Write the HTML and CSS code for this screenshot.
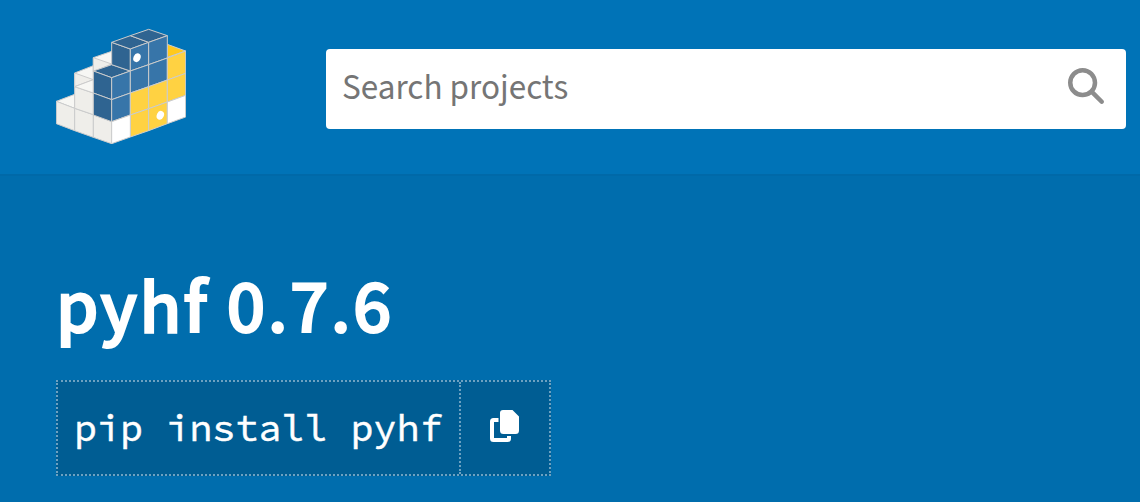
FILE: index.html
```html
<!DOCTYPE html>
<html lang="en">
<head>
<meta charset="utf-8">
<title>pyhf 0.7.6</title>
<link rel="stylesheet" href="styles.css">
</head>
<body>
<header class="site-header">
  <a class="logo" aria-label="PyPI">
    <svg class="logo-art" viewBox="30 24 390 348">
      <g stroke="#ccc" stroke-width="3" stroke-linejoin="round">
        <g fill="#f7f7f4">
          <path d="M31 244L86 223V265Z"/>
          <path d="M86 159L142 137V219L86 200Z"/>
          <path d="M142 113L197 94V136L142 155Z"/>
        </g>
        <g fill="#efeeea">
          <path d="M31 244L86 265V332L31 311Z"/>
          <path d="M86 265L142 284V352L86 332Z"/>
          <path d="M142 284L197 304V371L142 352Z"/>
          <path d="M86 200L142 219V284L86 265Z"/>
          <path d="M86 159L142 179L86 200Z"/>
          <path d="M142 113L197 132L142 155Z"/>
        </g>
        <path fill="#f7f7f4" d="M86 200L142 179V219Z"/>
        <path fill="#ffc91d" d="M364 73L419 93L364 112Z"/>
        <g fill="#2f6491">
          <path d="M142 153L197 134L253 153L197 173Z"/>
          <path d="M142 153L197 173V239L142 219Z"/>
          <path d="M142 219L197 239V305L142 285Z"/>
          <path d="M197 67L253 87V153L197 134Z"/>
          <path d="M197 67L253 47L308 67L253 87Z"/>
          <path d="M253 47L308 28L364 47L308 67Z"/>
        </g>
        <g fill="#3775a9">
          <path d="M253 87L308 67V134L253 153Z"/>
          <path d="M308 67L364 47V114L308 134Z"/>
          <path d="M197 173L253 153V219L197 239Z"/>
          <path d="M253 153L308 134V200L253 219Z"/>
          <path d="M308 134L364 114V180L308 200Z"/>
          <path d="M197 239L253 219V285L197 305Z"/>
        </g>
        <g fill="#ffd242">
          <path d="M364 114L419 93V160L364 180Z"/>
          <path d="M253 219L308 200V266L253 285Z"/>
          <path d="M308 200L364 180V246L308 266Z"/>
          <path d="M364 180L419 160V226L364 246Z"/>
          <path d="M253 285L308 266V332L253 351Z"/>
          <path d="M308 266L364 246V311L308 332Z"/>
        </g>
        <g fill="#fff">
          <path d="M197 305L253 285V351L197 371Z"/>
          <path d="M364 246L419 226V291L364 311Z"/>
        </g>
      </g>
      <g fill="#fff">
        <ellipse cx="273" cy="113" rx="10.5" ry="13.5" transform="rotate(25 273 113)"/>
        <ellipse cx="343" cy="286" rx="10.5" ry="13.5" transform="rotate(25 343 286)"/>
      </g>
    </svg>
  </a>
  <div class="search">
    <span class="search-text">Search projects</span>
    <svg class="search-icon" viewBox="0 0 512 512"><path fill="#8c8c8c" d="M416 208c0 45.900-14.900 88.300-40 122.700L502.600 457.400c12.500 12.500 12.500 32.800 0 45.300s-32.800 12.500-45.300 0L330.700 376c-34.400 25.200-76.800 40-122.700 40C93.100 416 0 322.900 0 208S93.100 0 208 0s208 93.100 208 208zM208 352a144 144 0 1 0 0-288 144 144 0 1 0 0 288z"/></svg>
  </div>
</header>
<main class="banner">
  <h1 class="package-name">pyhf 0.7.6</h1>
  <div class="pip">
    <span class="pip-command">pip install pyhf</span>
    <span class="copy"><svg class="copy-icon" viewBox="0 0 29 32"><path fill="#fff" d="M13 0H22.500L29 6.500V20.500Q29 24 25.500 24H13.500Q10 24 10 20.500V3Q10 0 13 0ZM3.500 8H8.500V12H4V28H17V26H21V28.500Q21 32 17.500 32H3.500Q0 32 0 28.500V11.500Q0 8 3.500 8Z"/></svg></span>
  </div>
</main>
</body>
</html>
```
FILE: styles.css
```css
* { box-sizing: border-box; }
body {
  margin: 0;
  height: 502px;
  overflow: hidden;
  background: #006dad;
  color: #fff;
  font-family: "Source Sans 3", "Source Sans Pro", "Noto Sans CJK JP", sans-serif;
}
.site-header {
  display: flex;
  align-items: flex-start;
  height: 176px;
  padding: 28px 14px 0 56px;
  background: #0073b7;
  border-bottom: 2px solid #0069a8;
}
.logo { width: 130px; height: 116px; margin-right: 140px; }
.logo-art { display: block; width: 130px; height: 116px; }
.search {
  display: flex;
  justify-content: space-between;
  flex: 1;
  height: 80px;
  margin-top: 21px;
  padding: 0 22px 0 16px;
  background: #fff;
  border-radius: 4px;
}
.search-text {
  color: #757575;
  font-size: 35.2px;
  line-height: 79px;
  white-space: nowrap;
}
.search-icon { width: 36px; height: 36px; margin-top: 19px; }
.banner { padding: 80px 56px 0; }
.package-name {
  height: 104px;
  margin: 0 0 20px;
  font-size: 76px;
  font-weight: 500;
  line-height: 105px;
  letter-spacing: 2.4px;
  white-space: nowrap;
  -webkit-text-stroke: 2.2px #fff;
}
.pip {
  display: flex;
  width: 495px;
  height: 96px;
  background: #005d93;
  border: 2px dotted #6da1c1;
}
.pip-command {
  width: 401px;
  padding-left: 16px;
  font-family: "Source Code Pro", "Noto Sans Mono CJK JP", "DejaVu Sans Mono", monospace;
  font-size: 38.4px;
  line-height: 90px;
  white-space: nowrap;
  -webkit-text-stroke: 0.5px #fff;
}
.copy {
  display: flex;
  flex: 1;
  padding: 28px 0 0 29px;
  border-left: 2px dotted #6da1c1;
}
.copy-icon { width: 29px; height: 32px; }
```
